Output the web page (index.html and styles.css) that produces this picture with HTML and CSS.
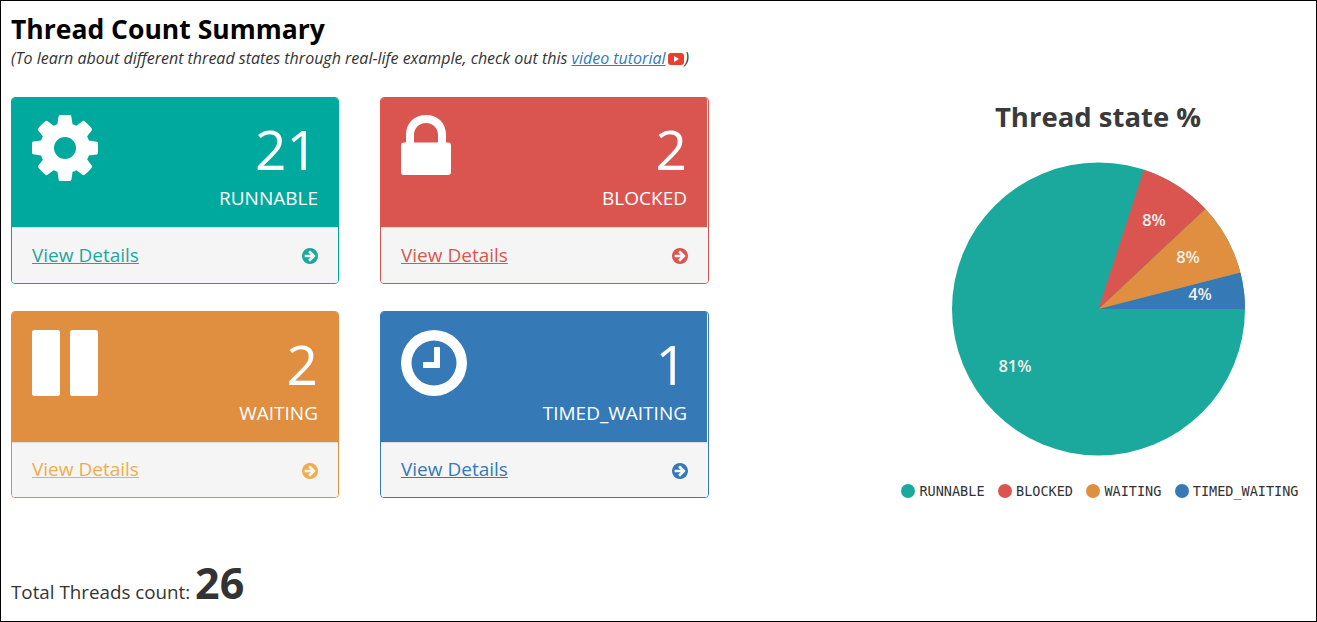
FILE: index.html
```html
<!DOCTYPE html>
<html lang="en">
<head>
    <meta charset="UTF-8">
    <title>Thread Count Summary</title>
    <link rel="stylesheet" href="styles.css">
</head>
<body>
    <h2 class="page-title">Thread Count Summary</h2>
    <p class="page-note">(To learn about different thread states through real-life example, check out this <a href="#">video tutorial</a><svg class="yt-icon" viewBox="0 0 16 12"><rect width="16" height="12" rx="3" fill="#e8402f"/><path d="M6 3l5 3-5 3z" fill="#fff"/></svg>)</p>

    <div class="summary">
        <div class="cards">
            <div class="card card-runnable">
                <div class="card-head">
                    <svg class="card-icon" viewBox="128 128 1536 1536"><path d="M1152 896q0-106-75-181t-181-75-181 75-75 181 75 181 181 75 181-75 75-181zm512-109v222q0 12-8 23t-20 13l-185 28q-19 54-39 91 35 50 107 138 10 12 10 25t-9 23q-27 37-99 108t-94 71q-12 0-26-9l-138-108q-44 23-91 38-16 136-29 186-7 28-36 28h-222q-14 0-24.5-8.5t-11.5-21.5l-28-184q-49-16-90-37l-141 107q-10 9-25 9-14 0-25-11-126-114-165-168-7-10-7-23 0-12 8-23 15-21 51-66.5t54-70.5q-27-50-41-99l-183-27q-13-2-21-12.5t-8-23.5v-222q0-12 8-23t19-13l186-28q14-46 39-92-40-57-107-138-10-12-10-24 0-10 9-23 26-36 98.5-107.5t94.5-71.5q13 0 26 10l138 107q44-23 91-38 16-136 29-186 7-28 36-28h222q14 0 24.5 8.5t11.5 21.5l28 184q49 16 90 37l142-107q9-9 24-9 13 0 25 10 129 119 165 170 7 8 7 22 0 12-8 23-15 21-51 66.5t-54 70.5q26 50 41 98l183 28q13 2 21 12.5t8 23.5z"/></svg>
                    <div class="card-stat">
                        <div class="card-count">21</div>
                        <div class="card-label">RUNNABLE</div>
                    </div>
                </div>
                <div class="card-foot">
                    <a href="#">View Details</a>
                    <svg class="foot-icon" viewBox="128 128 1536 1536"><path fill-rule="evenodd" d="M1413 896q0-27-18-45l-91-91-362-362q-18-18-45-18t-45 18l-91 91q-18 18-18 45t18 45l189 189h-502q-26 0-45 19t-19 45v128q0 26 19 45t45 19h502l-189 189q-19 19-19 45t19 45l91 91q18 18 45 18t45-18l362-362 91-91q18-18 18-45zm251 0q0 209-103 385.500t-279.500 279.500-385.500 103-385.500-103-279.500-279.500-103-385.500 103-385.500 279.500-279.500 385.500-103 385.500 103 279.500 279.500 103 385.500z"/></svg>
                </div>
            </div>

            <div class="card card-blocked">
                <div class="card-head">
                    <svg class="card-icon" viewBox="0 0 66 66"><path fill-rule="evenodd" d="M3 27.500h2V20C5 8 13 0 25 0s20 8 20 20v7.500h2c2 0 3 1 3 3V57c0 2-1 3-3 3H3c-2 0-3-1-3-3V30.500c0-2 1-3 3-3zm10 0h24V20c0-7-5-12-12-12s-12 5-12 12z"/></svg>
                    <div class="card-stat">
                        <div class="card-count">2</div>
                        <div class="card-label">BLOCKED</div>
                    </div>
                </div>
                <div class="card-foot">
                    <a href="#">View Details</a>
                    <svg class="foot-icon" viewBox="128 128 1536 1536"><path fill-rule="evenodd" d="M1413 896q0-27-18-45l-91-91-362-362q-18-18-45-18t-45 18l-91 91q-18 18-18 45t18 45l189 189h-502q-26 0-45 19t-19 45v128q0 26 19 45t45 19h502l-189 189q-19 19-19 45t19 45l91 91q18 18 45 18t45-18l362-362 91-91q18-18 18-45zm251 0q0 209-103 385.500t-279.500 279.500-385.500 103-385.500-103-279.500-279.500-103-385.500 103-385.500 279.500-279.500 385.500-103 385.500 103 279.500 279.500 103 385.500z"/></svg>
                </div>
            </div>

            <div class="card card-waiting">
                <div class="card-head">
                    <svg class="card-icon" viewBox="0 0 66 66"><rect width="28" height="66" rx="2.500"/><rect x="38" width="28" height="66" rx="2.500"/></svg>
                    <div class="card-stat">
                        <div class="card-count">2</div>
                        <div class="card-label">WAITING</div>
                    </div>
                </div>
                <div class="card-foot">
                    <a href="#">View Details</a>
                    <svg class="foot-icon" viewBox="128 128 1536 1536"><path fill-rule="evenodd" d="M1413 896q0-27-18-45l-91-91-362-362q-18-18-45-18t-45 18l-91 91q-18 18-18 45t18 45l189 189h-502q-26 0-45 19t-19 45v128q0 26 19 45t45 19h502l-189 189q-19 19-19 45t19 45l91 91q18 18 45 18t45-18l362-362 91-91q18-18 18-45zm251 0q0 209-103 385.500t-279.500 279.500-385.500 103-385.500-103-279.500-279.500-103-385.500 103-385.500 279.500-279.500 385.500-103 385.500 103 279.500 279.500 103 385.500z"/></svg>
                </div>
            </div>

            <div class="card card-timed">
                <div class="card-head">
                    <svg class="card-icon" viewBox="0 0 66 66"><path fill-rule="evenodd" d="M33 0a33 33 0 1 1 0 66a33 33 0 1 1 0-66zm0 10.500a22.500 22.500 0 1 0 0 45a22.500 22.500 0 1 0 0-45z"/><path d="M34 17h4c.6 0 1 .4 1 1v19c0 .6-.4 1-1 1H23c-.6 0-1-.4-1-1v-4c0-.6.4-1 1-1h10V18c0-.6.4-1 1-1z"/></svg>
                    <div class="card-stat">
                        <div class="card-count">1</div>
                        <div class="card-label">TIMED_WAITING</div>
                    </div>
                </div>
                <div class="card-foot">
                    <a href="#">View Details</a>
                    <svg class="foot-icon" viewBox="128 128 1536 1536"><path fill-rule="evenodd" d="M1413 896q0-27-18-45l-91-91-362-362q-18-18-45-18t-45 18l-91 91q-18 18-18 45t18 45l189 189h-502q-26 0-45 19t-19 45v128q0 26 19 45t45 19h502l-189 189q-19 19-19 45t19 45l91 91q18 18 45 18t45-18l362-362 91-91q18-18 18-45zm251 0q0 209-103 385.500t-279.500 279.500-385.500 103-385.500-103-279.500-279.500-103-385.500 103-385.500 279.500-279.500 385.500-103 385.500 103 279.500 279.500 103 385.500z"/></svg>
                </div>
            </div>
        </div>

        <div class="chart">
            <div class="chart-title">Thread state %</div>
            <svg class="pie" viewBox="0 0 296 296">
                <circle cx="148.500" cy="148" r="146.500" fill="#1ba99d"/>
                <path d="M148.500 148L295 148A146.500 146.500 0 0 0 290.400 111.600Z" fill="#3579b6"/>
                <path d="M148.500 148L290.400 111.600A146.500 146.500 0 0 0 255.300 47.700Z" fill="#e08e3f"/>
                <path d="M148.500 148L255.300 47.700A146.500 146.500 0 0 0 193.800 8.700Z" fill="#db5550"/>
                <text class="pie-label" x="204" y="65">8%</text>
                <text class="pie-label" x="238" y="102">8%</text>
                <text class="pie-label" x="250" y="139">4%</text>
                <text class="pie-label" x="65" y="211">81%</text>
            </svg>
            <div class="legend">
                <span class="legend-item"><i class="dot dot-runnable"></i>RUNNABLE</span>
                <span class="legend-item"><i class="dot dot-blocked"></i>BLOCKED</span>
                <span class="legend-item"><i class="dot dot-waiting"></i>WAITING</span>
                <span class="legend-item"><i class="dot dot-timed"></i>TIMED_WAITING</span>
            </div>
        </div>
    </div>

    <div class="total">Total Threads count: <b>26</b></div>
</body>
</html>
```

FILE: styles.css
```css
* {
    box-sizing: border-box;
}
html {
    height: 100%;
}
body {
    font-family: "Open Sans", sans-serif;
    background-color: #fff;
    color: #333;
    margin: 0;
    height: 622px;
    overflow: hidden;
    border: 1px solid #000;
    padding: 10px 0 0 10px;
}
.page-title {
    margin: 0;
    font-size: 26.5px;
    line-height: 36px;
    font-weight: 700;
    color: #000;
}
.page-note {
    margin: 0;
    font-size: 16px;
    line-height: 22px;
    font-style: italic;
}
.page-note a {
    color: #337ab7;
}
.yt-icon {
    width: 16px;
    height: 12px;
    margin: 0 1px 0 2px;
    vertical-align: -1px;
}
.summary {
    display: flex;
    justify-content: space-between;
    margin-top: 28px;
}
.cards {
    display: grid;
    grid-template-columns: 328px 329px;
    column-gap: 41px;
    row-gap: 27px;
    align-self: flex-start;
}
.card {
    border: 1px solid;
    border-radius: 4px;
    height: 187px;
    overflow: hidden;
    background-color: #fff;
}
.card-head {
    display: flex;
    justify-content: space-between;
    height: 129px;
    padding: 17px 20px 0 20px;
    color: #fff;
}
.card-icon {
    width: 66px;
    height: 66px;
    fill: #fff;
}
.card-stat {
    text-align: right;
}
.card-count {
    font-size: 55px;
    line-height: 60px;
    margin-top: 4px;
}
.card-label {
    font-size: 19px;
    line-height: 24px;
    margin-top: 7px;
}
.card-foot {
    display: flex;
    justify-content: space-between;
    align-items: center;
    height: 57px;
    padding: 0 20px;
    background-color: #f5f5f5;
    border-top: 1px solid #ddd;
    font-size: 19px;
}
.card-foot a {
    margin-top: -2px;
}
.foot-icon {
    width: 16px;
    height: 16px;
    fill: currentColor;
}
.card-runnable { border-color: #00a99d; }
.card-runnable .card-head { background-color: #00a99d; }
.card-runnable .card-foot { color: #1ba99d; }
.card-runnable a { color: #1ba99d; }
.card-blocked { border-color: #db5550; }
.card-blocked .card-head { background-color: #db5550; margin-right: 1px; }
.card-blocked .card-foot { color: #db5550; }
.card-blocked a { color: #db5550; }
.card-waiting { border-color: #e08e3f; }
.card-waiting .card-head { background-color: #e08e3f; height: 130px; padding-top: 18px; }
.card-waiting .card-foot { color: #f0ad4e; height: 56px; }
.card-waiting a { color: #f0ad4e; }
.card-timed { border-color: #3579b6; }
.card-timed .card-head { background-color: #3579b6; margin-right: 1px; height: 130px; padding-top: 18px; }
.card-timed .card-foot { color: #3579b6; height: 56px; }
.card-timed a { color: #3579b6; }
.card-waiting .card-foot a,
.card-timed .card-foot a {
    margin-top: -3px;
}
.chart {
    width: 436px;
    display: flex;
    flex-direction: column;
    align-items: center;
}
.chart-title {
    font-size: 27.5px;
    line-height: 40px;
    font-weight: 700;
    color: #3a3a3a;
}
.pie {
    display: block;
    width: 296px;
    height: 296px;
    margin-top: 24px;
}
.pie-label {
    font-family: "Open Sans", sans-serif;
    font-size: 16.5px;
    font-weight: 600;
    fill: #f0f0ea;
    text-anchor: middle;
}
.legend {
    display: flex;
    gap: 13.5px;
    margin-top: 24px;
    padding-left: 4px;
    font-family: "DejaVu Sans Mono", monospace;
    font-size: 13.5px;
    line-height: 20px;
    color: #333;
}
.legend-item {
    display: flex;
    align-items: center;
    gap: 4px;
}
.dot {
    display: block;
    width: 14px;
    height: 14px;
    border-radius: 50%;
}
.dot-runnable { background-color: #1ba99d; }
.dot-blocked { background-color: #db5550; }
.dot-waiting { background-color: #e08e3f; }
.dot-timed { background-color: #3579b6; }
.total {
    margin-top: 57px;
    font-size: 18.8px;
}
.total b {
    font-size: 43px;
    line-height: 50px;
}
```
